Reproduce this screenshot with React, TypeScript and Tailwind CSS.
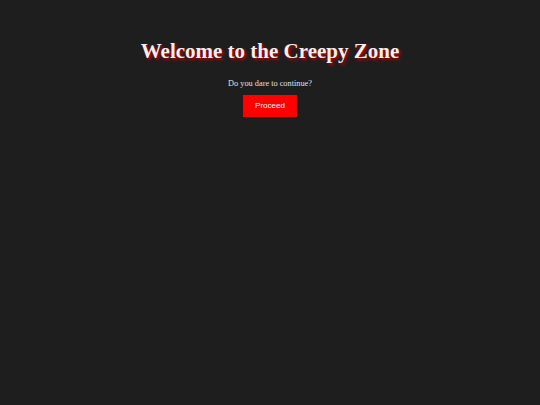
export default function App() {
  return (
    <div className="min-h-screen w-full bg-[#1e1e1e] flex flex-col items-center pt-[38px] font-['Liberation_Serif',serif]">
      <h1 className="text-[21px] leading-[26px] font-bold text-[#f4eeee] [text-shadow:2px_2px_3px_#c00000]">
        Welcome to the Creepy Zone
      </h1>
      <p className="mt-[15px] text-[8.3px] leading-[10px] text-[#e0e0e0]">Do you dare to continue?</p>
      <button className="mt-[6px] w-[54px] h-[22px] bg-[#ff0000] text-white text-[8px] font-['Liberation_Sans',sans-serif]">
        Proceed
      </button>
    </div>
  )
}
